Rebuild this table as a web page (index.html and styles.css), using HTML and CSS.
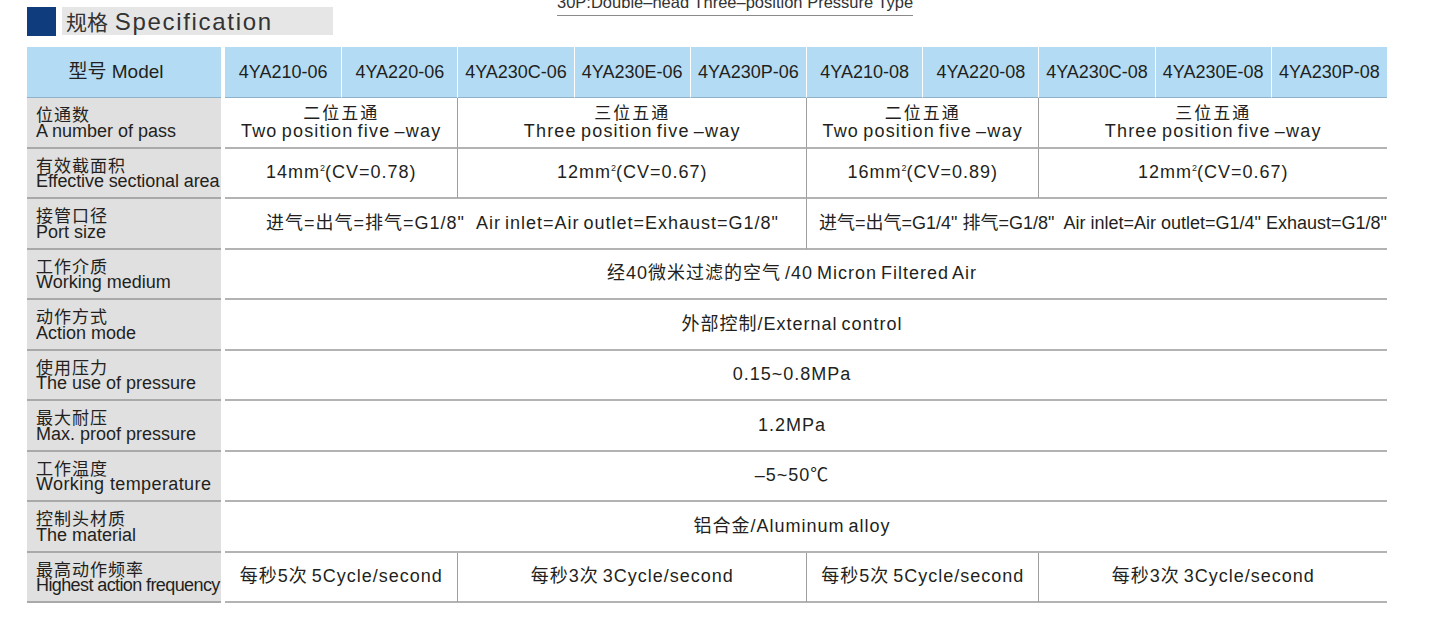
FILE: index.html
```html
<!DOCTYPE html>
<html lang="zh">
<head>
<meta charset="utf-8">
<title>规格 Specification</title>
<link rel="stylesheet" href="styles.css">
</head>
<body>
<div class="page">
  <div class="top">
    <div class="title">
      <span class="mark"></span>
      <div class="title-bar"><span class="zh">规格</span> <span class="en">Specification</span></div>
    </div>
    <div class="caption">30P:Double–head Three–position Pressure Type</div>
  </div>

  <div class="spec">
    <div class="label head"><span class="txt">型号 Model</span></div>
    <div class="model">4YA210-06</div>
    <div class="model">4YA220-06</div>
    <div class="model">4YA230C-06</div>
    <div class="model">4YA230E-06</div>
    <div class="model">4YA230P-06</div>
    <div class="model">4YA210-08</div>
    <div class="model">4YA220-08</div>
    <div class="model">4YA230C-08</div>
    <div class="model">4YA230E-08</div>
    <div class="model">4YA230P-08</div>

    <div class="label"><span class="zh">位通数</span><span class="en">A number of pass</span></div>
    <div class="cell span2 stack"><span class="zh wide">二位五通</span><span class="en">Two position five –way</span></div>
    <div class="cell span3 stack"><span class="zh wide">三位五通</span><span class="en">Three position five –way</span></div>
    <div class="cell span2 stack"><span class="zh wide">二位五通</span><span class="en">Two position five –way</span></div>
    <div class="cell span3 stack"><span class="zh wide">三位五通</span><span class="en">Three position five –way</span></div>

    <div class="label"><span class="zh">有效截面积</span><span class="en narrow">Effective sectional area</span></div>
    <div class="cell span2"><span class="txt">14mm<sup>2</sup>(CV=0.78)</span></div>
    <div class="cell span3"><span class="txt">12mm<sup>2</sup>(CV=0.67)</span></div>
    <div class="cell span2"><span class="txt">16mm<sup>2</sup>(CV=0.89)</span></div>
    <div class="cell span3"><span class="txt">12mm<sup>2</sup>(CV=0.67)</span></div>

    <div class="label"><span class="zh">接管口径</span><span class="en">Port size</span></div>
    <div class="cell span5 port"><span class="txt">进气=出气=排气=G1/8"&nbsp;&nbsp; Air inlet=Air outlet=Exhaust=G1/8"</span></div>
    <div class="cell span5 port dense"><span class="txt">进气=出气=G1/4" 排气=G1/8"&nbsp; Air inlet=Air outlet=G1/4" Exhaust=G1/8"</span></div>

    <div class="label"><span class="zh">工作介质</span><span class="en">Working medium</span></div>
    <div class="cell span10 full"><span class="txt">经40微米过滤的空气 /40 Micron Filtered Air</span></div>

    <div class="label"><span class="zh">动作方式</span><span class="en">Action mode</span></div>
    <div class="cell span10 full"><span class="txt">外部控制/External control</span></div>

    <div class="label"><span class="zh">使用压力</span><span class="en">The use of pressure</span></div>
    <div class="cell span10 full"><span class="txt">0.15~0.8MPa</span></div>

    <div class="label"><span class="zh">最大耐压</span><span class="en">Max. proof pressure</span></div>
    <div class="cell span10 full"><span class="txt">1.2MPa</span></div>

    <div class="label"><span class="zh">工作温度</span><span class="en loose">Working temperature</span></div>
    <div class="cell span10 full"><span class="txt">–5~50℃</span></div>

    <div class="label"><span class="zh">控制头材质</span><span class="en">The material</span></div>
    <div class="cell span10 full"><span class="txt">铝合金/Aluminum alloy</span></div>

    <div class="label"><span class="zh">最高动作频率</span><span class="en tight">Highest action frequency</span></div>
    <div class="cell span2"><span class="txt">每秒5次 5Cycle/second</span></div>
    <div class="cell span3"><span class="txt">每秒3次 3Cycle/second</span></div>
    <div class="cell span2"><span class="txt">每秒5次 5Cycle/second</span></div>
    <div class="cell span3"><span class="txt">每秒3次 3Cycle/second</span></div>
  </div>
</div>
</body>
</html>
```

FILE: styles.css
```css
* { box-sizing: border-box; }

html, body {
  margin: 0;
  padding: 0;
  background: #ffffff;
}

body {
  font-family: "Liberation Sans", "Noto Sans CJK SC", sans-serif;
  color: #231f20;
  overflow: hidden;
}

.page {
  padding-left: 27px;
  width: 1445px;
  height: 625px;
}

.top {
  display: flex;
  align-items: flex-start;
  height: 36px;
}

.title {
  display: flex;
  gap: 6px;
  margin-top: 7px;
}

.mark {
  display: block;
  width: 29px;
  height: 29px;
  background: #0f3c7c;
}

.title-bar {
  width: 271px;
  height: 28px;
  background: #e6e6e6;
  padding-left: 4px;
  font-size: 24px;
  line-height: 29px;
  color: #333333;
  white-space: nowrap;
}

.title-bar .zh {
  font-family: "Noto Sans CJK SC", sans-serif;
  font-size: 21px;
}

.title-bar .en {
  letter-spacing: 1.7px;
}

.caption {
  margin-top: -6px;
  margin-left: 224px;
  width: 356px;
  height: 22px;
  font-size: 16.5px;
  line-height: 16px;
  color: #333333;
  border-bottom: 1px solid #8a8a8a;
  white-space: nowrap;
}

.spec {
  margin-top: 11px;
  display: grid;
  width: 1360px;
  grid-template-columns: 198px repeat(10, 1fr);
  grid-template-rows: 51px repeat(10, 50.5px);
}

.label {
  margin-right: 4px;
  background: #e0e0e0;
  border-bottom: 2px solid #a9a9a9;
  padding-left: 9px;
  padding-top: 1px;
  display: flex;
  flex-direction: column;
  justify-content: center;
  font-size: 18px;
  white-space: nowrap;
}

.label .zh {
  display: block;
  height: 16.5px;
  font-family: "Noto Sans CJK SC", sans-serif;
  font-size: 17px;
  line-height: 16.5px;
  letter-spacing: 1px;
}

.label .en {
  display: block;
  height: 17px;
  line-height: 17px;
}

.label .narrow { letter-spacing: -0.1px; }
.label .tight { letter-spacing: -0.6px; }
.label .loose { letter-spacing: 0.4px; }

.label.head {
  background: #b3dcf4;
  border-bottom: 1px solid #8fb2c8;
  padding-left: 0;
  padding-top: 0;
  padding-right: 16px;
  align-items: center;
  font-size: 19px;
  line-height: 20px;
}

.model {
  background: #b3dcf4;
  border-bottom: 1px solid #8fb2c8;
  display: flex;
  align-items: center;
  justify-content: center;
  font-size: 18px;
  line-height: 20px;
  white-space: nowrap;
}

.model + .model {
  border-left: 1px solid #ffffff;
}

.cell {
  border-bottom: 2px solid #b3b3b3;
  display: flex;
  align-items: center;
  justify-content: center;
  font-size: 18px;
  line-height: 17px;
  letter-spacing: 1px;
  word-spacing: -2px;
  white-space: nowrap;
}

.cell sup {
  font-size: 9px;
  line-height: 0;
  vertical-align: 7px;
  letter-spacing: 0;
}

.cell + .cell {
  border-left: 1px solid #9e9e9e;
}

.stack {
  flex-direction: column;
  padding-top: 1px;
}

.stack .zh,
.stack .en {
  display: block;
  height: 16.5px;
  line-height: 16.5px;
}

.stack .en {
  letter-spacing: 1.2px;
}

.zh.wide {
  font-size: 17px;
  letter-spacing: 2px;
}

.span2 { grid-column: span 2; }
.span3 { grid-column: span 3; }
.span5 { grid-column: span 5; }
.span10 { grid-column: span 10; }

.port {
  padding-left: 14px;
}

.port.dense {
  padding-left: 12px;
  letter-spacing: 0;
  word-spacing: 0;
}

.full {
  padding-right: 28px;
}
```
